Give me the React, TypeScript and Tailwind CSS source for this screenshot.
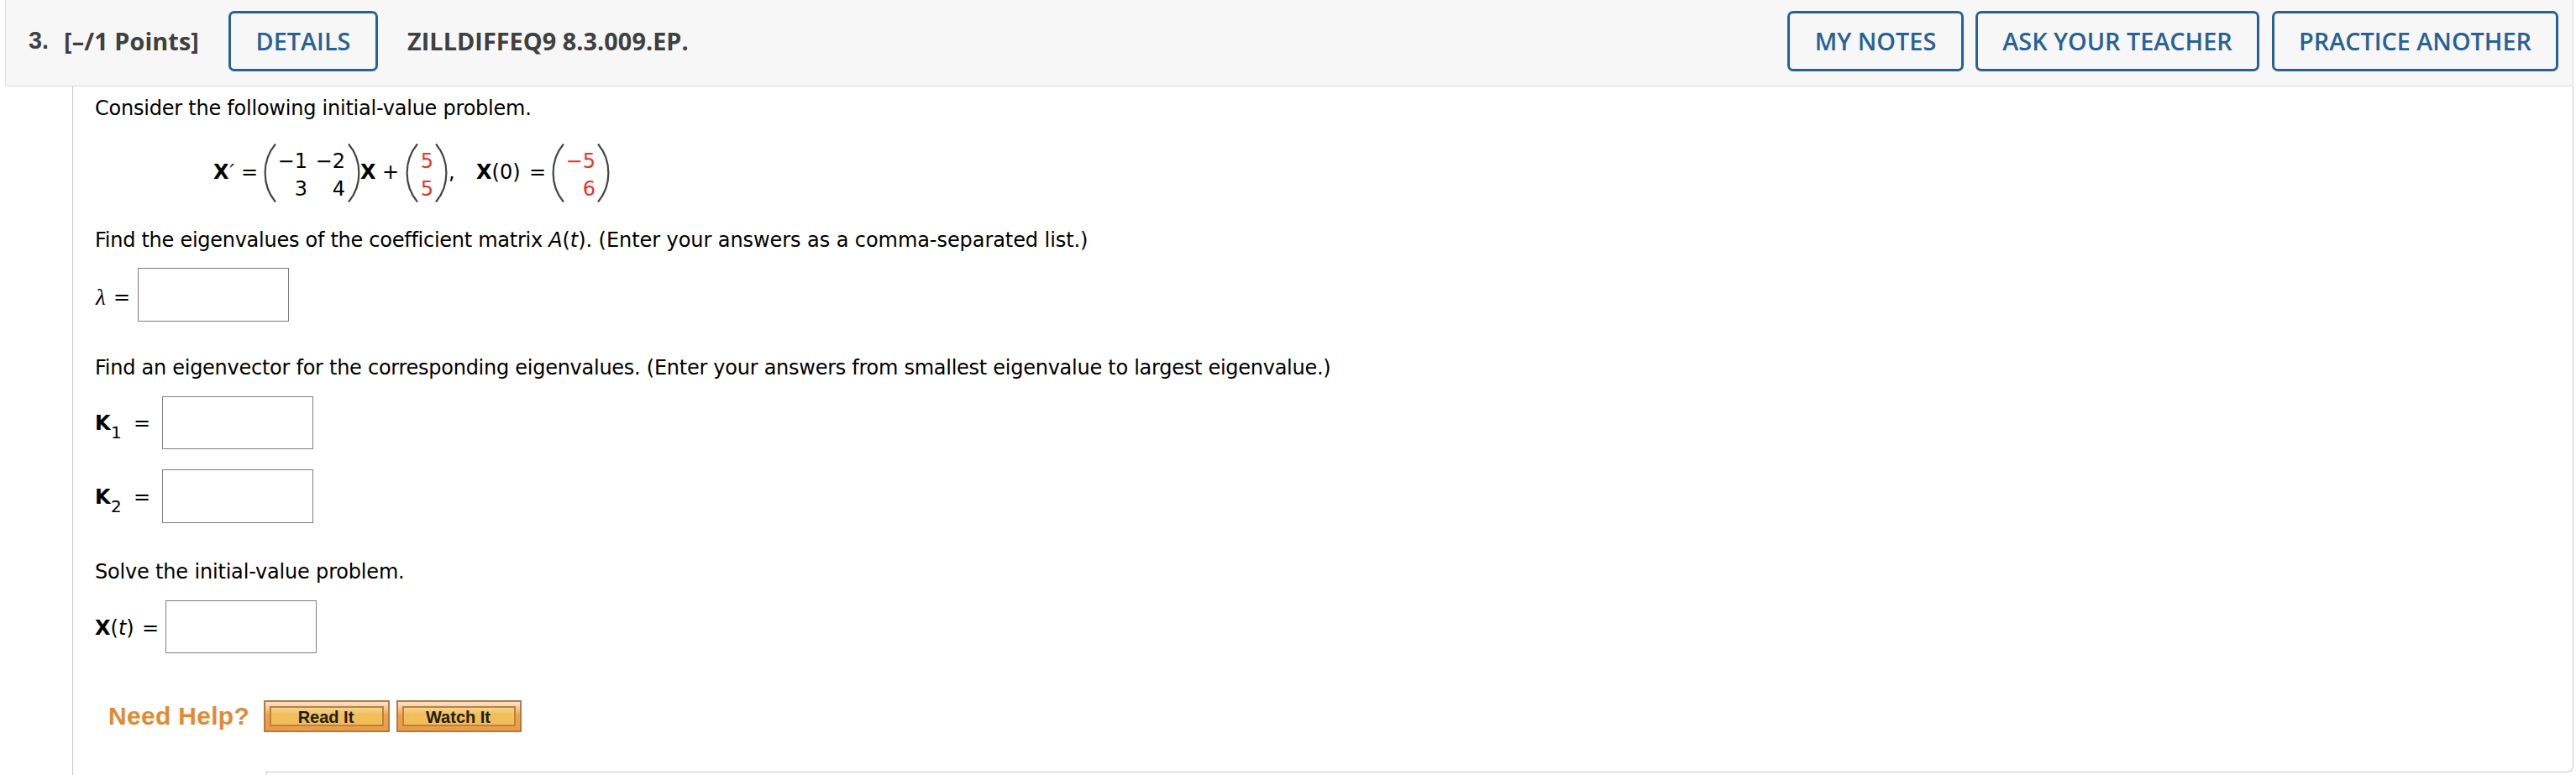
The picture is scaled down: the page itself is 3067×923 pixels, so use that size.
import type { ReactNode } from "react"

function HeaderButton({ children, className = "" }: { children: ReactNode; className?: string }) {
    return (
        <button
            className={`h-[72px] flex items-center justify-center rounded-[7px] border-[3px] border-[#286196] text-[#286196] text-[28.8px] leading-none font-semibold whitespace-nowrap ${className}`}
        >
            {children}
        </button>
    )
}

// Tall parenthesis around a matrix
function Paren({ right = false, className = "" }: { right?: boolean; className?: string }) {
    return (
        <svg viewBox="0 0 15 70" className={`w-[15px] h-[70px] shrink-0 ${right ? "-scale-x-100" : ""} ${className}`}>
            <path d="M14 0.5C-2.5 20 -2.5 50 14 69.5" fill="none" stroke="#444" strokeWidth="2.2" />
        </svg>
    )
}

function AnswerRow({
    label,
    labelClass,
    className,
    inputClass = "h-[63px]",
}: {
    label: ReactNode
    labelClass: string
    className: string
    inputClass?: string
}) {
    return (
        <div className={`flex items-center ${className}`}>
            <div className={`shrink-0 whitespace-nowrap ${labelClass}`}>{label}</div>
            <input type="text" className={`w-[180px] border border-[#7f7f7f] bg-white ${inputClass}`} />
        </div>
    )
}

function HelpButton({ children, className = "" }: { children: ReactNode; className?: string }) {
    return (
        <button
            className={`h-[38px] border-2 border-[#b17a3e] bg-linear-to-b from-[#fbe6d3] via-[#eda351] via-45% to-[#eb9c48] p-[5px] ${className}`}
        >
            <span className="flex h-full items-center justify-center border-2 border-[#b98438] bg-linear-to-b from-[#f6d596] via-[#f2bf5c] via-35% to-[#f2bd58] pt-0.5 pr-0.5 font-['Liberation_Sans',sans-serif] text-[20px] leading-none font-bold text-[#241c08]">
                {children}
            </span>
        </button>
    )
}

export default function App() {
    return (
        <main className="h-[923px] w-[3067px] overflow-hidden bg-white pl-[6px] pr-[3px] font-['DejaVu_Sans',sans-serif] text-[24px] leading-[32px] text-black">
            {/* Question header */}
            <header className="flex h-[103px] items-start rounded-b-[4px] border-x border-b border-[#dcdcdc] bg-[#f7f7f7] pt-[13px] pr-[17px] pl-[27px] font-['Open_Sans',sans-serif] text-[28.8px] font-bold text-[#404040]">
                <span className="w-[42px] pt-[19px] font-['Liberation_Sans',sans-serif]">3.</span>
                <span className="w-[196px] pt-[20px] tracking-[0.1px] whitespace-nowrap">[–/1 Points]</span>
                <HeaderButton className="w-[178px]">DETAILS</HeaderButton>
                <span className="ml-[35px] pt-[20px] tracking-[0.05px] whitespace-nowrap">ZILLDIFFEQ9 8.3.009.EP.</span>
                <div className="ml-auto flex">
                    <HeaderButton className="w-[210px]">MY NOTES</HeaderButton>
                    <HeaderButton className="ml-[14px] w-[338px]">ASK YOUR TEACHER</HeaderButton>
                    <HeaderButton className="ml-[15px] w-[341px]">PRACTICE ANOTHER</HeaderButton>
                </div>
            </header>

            {/* Question body */}
            <section className="ml-[80px] h-[820px] border-l border-[#c8c8c8]">
                <div className="h-[808px] border-r border-[#c8c8c8] pt-[10px] pl-[26px]">
                    <p className="tracking-[-0.23px]">Consider the following initial-value problem.</p>

                    <div className="mt-[26px] ml-[141px] flex h-[70px] items-center whitespace-nowrap">
                        <span className="-mt-0.5 flex w-[33px]">
                            <b className="tracking-[-1px]">X</b>
                            <i className="ml-[2px]">′</i>
                        </span>
                        <span className="w-[27px] -mt-0.5">=</span>
                        <Paren />
                        <div className="mt-[5px] grid grid-cols-[37px_45px] text-right leading-[33px]">
                            <span>−1</span>
                            <span>−2</span>
                            <span>3</span>
                            <span>4</span>
                        </div>
                        <Paren right className="ml-[3px]" />
                        <b className="w-[26px] -mt-0.5">X</b>
                        <span className="w-[28px] -mt-0.5">+</span>
                        <Paren />
                        <div className="mt-[5px] grid w-[18px] text-right leading-[33px] text-[#ee3124]">
                            <span>5</span>
                            <span>5</span>
                        </div>
                        <Paren right className="ml-[2px]" />
                        <span className="ml-px w-[33px] -mt-0.5">,</span>
                        <span className="w-[63px] -mt-0.5">
                            <b>X</b>(0)
                        </span>
                        <span className="w-[27px] -mt-0.5">=</span>
                        <Paren />
                        <div className="mt-[5px] grid w-[37px] text-right leading-[33px] text-[#ee3124]">
                            <span>−5</span>
                            <span>6</span>
                        </div>
                        <Paren right className="ml-[2px]" />
                    </div>

                    <p className="mt-[29px] tracking-[-0.07px]">
                        <span className="tracking-[-0.27px]">Find the eigenvalues of the coefficient matrix </span>
                        <i>A</i>(<i>t</i>). (Enter your answers as a comma-separated list.)
                    </p>
                    <AnswerRow
                        className="mt-[17px]"
                        labelClass="flex w-[51px] pt-[5px]"
                        inputClass="h-[64px]"
                        label={
                            <>
                                <i className="w-[22px] pl-px font-['Liberation_Serif',serif] text-[27px]">λ</i>
                                <span>=</span>
                            </>
                        }
                    />

                    <p className="mt-[39px] tracking-[-0.265px]">
                        Find an eigenvector for the corresponding eigenvalues. (Enter your answers from smallest eigenvalue to largest
                        eigenvalue.)
                    </p>
                    <AnswerRow
                        className="mt-[18px]"
                        labelClass="flex w-[80px] pt-px"
                        label={
                            <>
                                <b className="w-[19px]">K</b>
                                <span className="w-[27px] pt-[11px] -mb-[11px] text-[20px]">1</span>
                                <span>=</span>
                            </>
                        }
                    />
                    <AnswerRow
                        className="mt-[24px]"
                        labelClass="flex w-[80px] pt-[2px]"
                        inputClass="h-[64px]"
                        label={
                            <>
                                <b className="w-[19px]">K</b>
                                <span className="w-[27px] pt-[11px] -mb-[11px] text-[20px]">2</span>
                                <span>=</span>
                            </>
                        }
                    />

                    <p className="mt-[42px] tracking-[-0.18px]">Solve the initial-value problem.</p>
                    <AnswerRow
                        className="mt-[18px]"
                        labelClass="flex w-[84px] pt-[3px]"
                        label={
                            <>
                                <span className="w-[56px]">
                                    <b>X</b>(<i>t</i>)
                                </span>
                                <span>=</span>
                            </>
                        }
                    />

                    {/* Help links */}
                    <div className="mt-[56px] ml-[16px] flex h-[38px] items-center">
                        <span className="w-[185px] font-['Liberation_Sans',sans-serif] text-[30px] font-bold tracking-[0.3px] text-[#e08a35]">
                            Need Help?
                        </span>
                        <HelpButton className="w-[150px]">Read It</HelpButton>
                        <HelpButton className="ml-[8px] w-[149px]">Watch It</HelpButton>
                    </div>
                </div>
                <div className="ml-[231px] h-[9px] rounded-br-[8px] border-r border-b border-[#c8c8c8]" />
                <div className="-mt-[2px] ml-[230px] h-[5px] w-px bg-[#c8c8c8]" />
            </section>
        </main>
    )
}
